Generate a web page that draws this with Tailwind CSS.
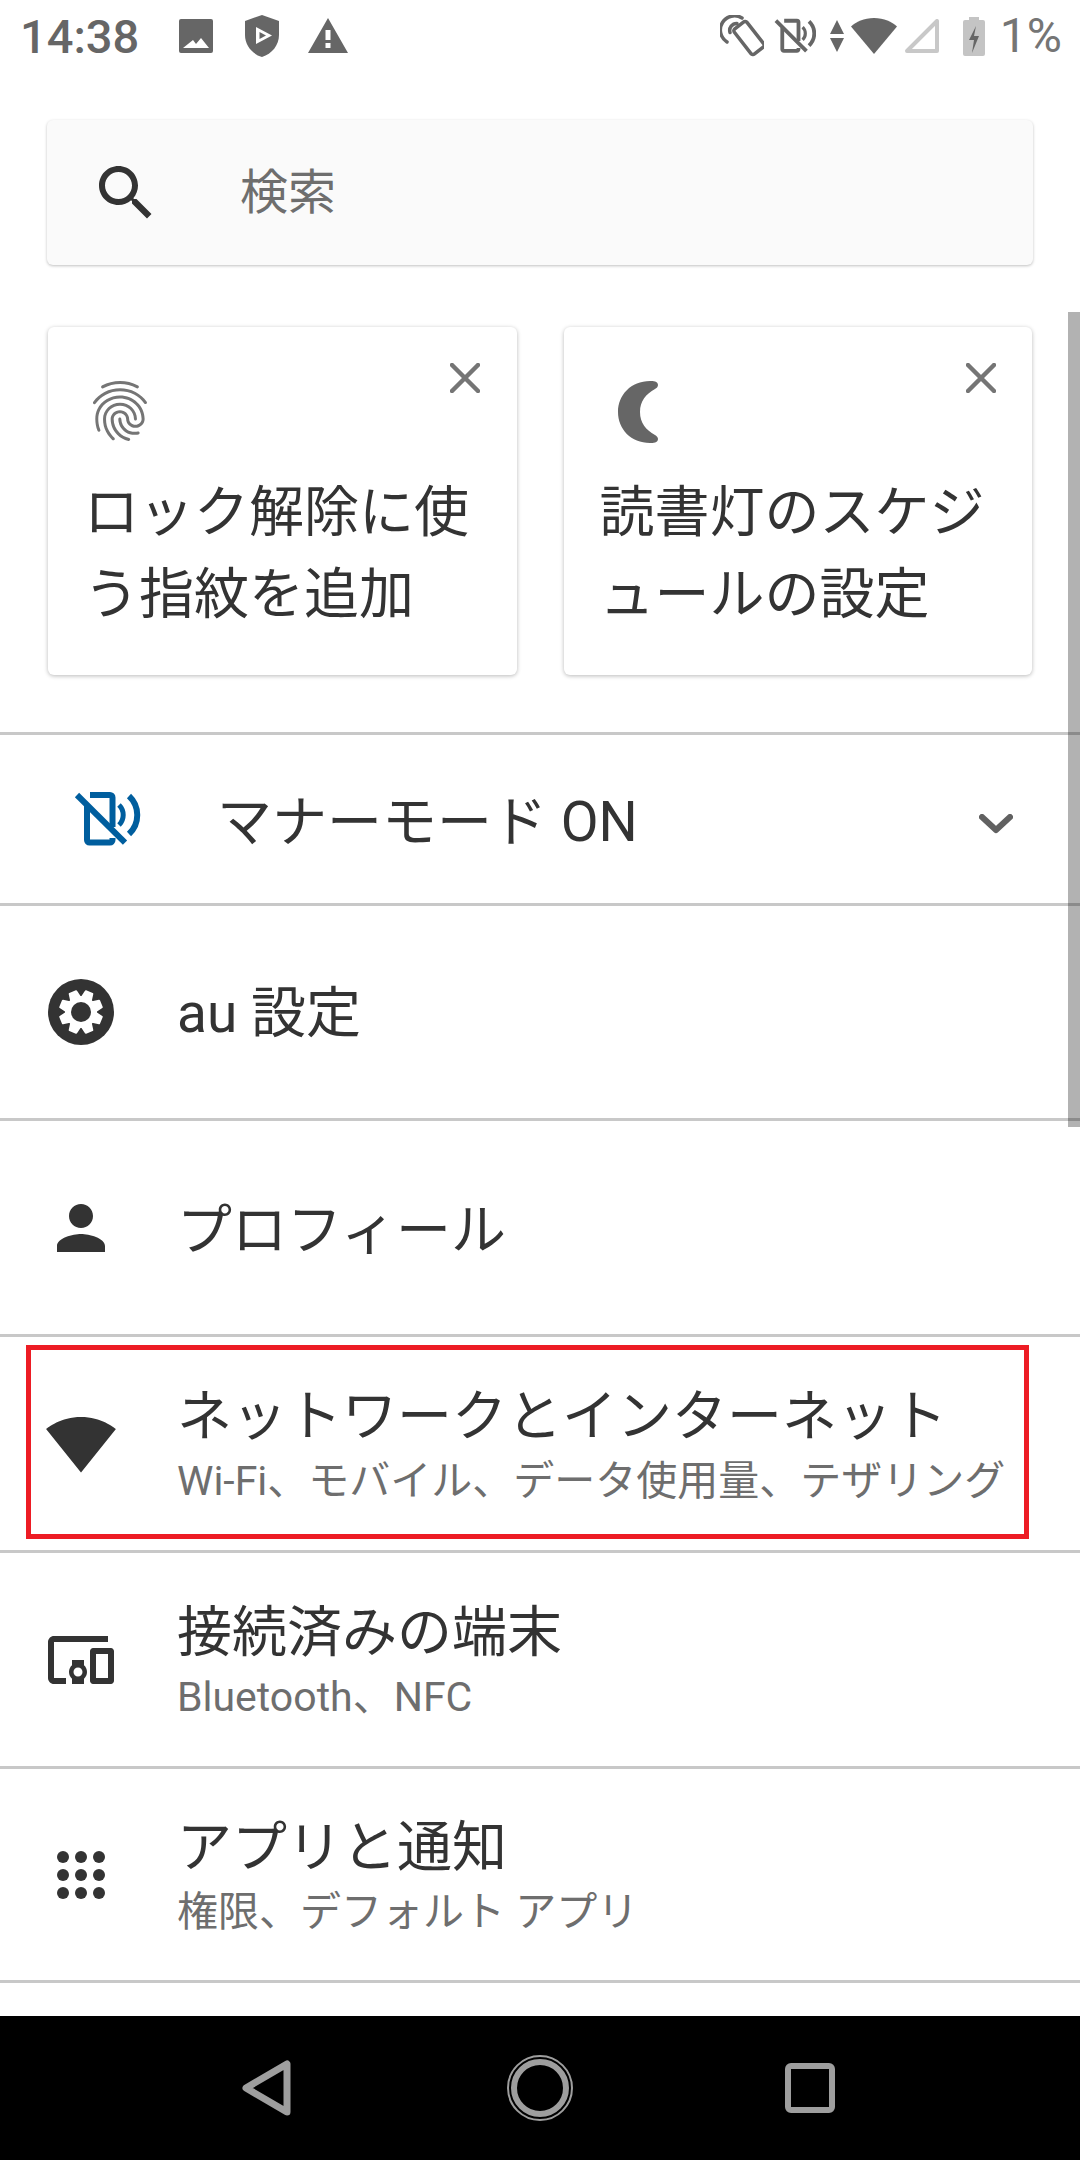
<!DOCTYPE html>
<html lang="ja">
  <head>
    <meta charset="UTF-8" />
    <meta name="viewport" content="width=device-width, initial-scale=1.0" />
    <script src="https://cdn.jsdelivr.net/npm/@tailwindcss/browser@4"></script>
    <title>設定</title>
  </head>

  <body>
    <div class="relative w-[1080px] h-[2160px] overflow-hidden bg-white flex flex-col font-['Roboto','Noto_Sans_CJK_JP',sans-serif]">
      <!-- status bar -->
      <div class="h-[72px] shrink-0 flex items-center text-[#666666]">
        <span class="ml-[20px] w-[119px] text-[47px] font-medium leading-none">14:38</span>
        <svg class="ml-[37px] w-[40px] h-[40px]" viewBox="0 0 40 40" fill="#666666"><path d="M5 3h30a2 2 0 0 1 2 2v30a2 2 0 0 1-2 2H5a2 2 0 0 1-2-2V5a2 2 0 0 1 2-2zm2 29h26l-8-10-5 6-3-4z" fill-rule="evenodd"/></svg>
        <svg class="ml-[26px] w-[40px] h-[44px]" viewBox="0 0 40 44" fill="#666666"><path d="M20 1 37 7v14c0 10-7 19-17 22C10 40 3 31 3 21V7zm-6 12v17l16-8.500z" fill-rule="evenodd"/><path d="M17.500 18 24 21.500 17.500 25z"/></svg>
        <svg class="ml-[26px] w-[40px] h-[36px]" viewBox="0 0 40 36" fill="#666666"><path d="M20 0 40 35H0zm-2.500 12v10h5V12zm0 13v5h5v-5z" fill-rule="evenodd"/></svg>
        <!-- right icons -->
        <svg class="ml-auto w-[44px] h-[42px]" viewBox="0 0 44 42" fill="none" stroke="#666666" stroke-width="3.500" stroke-linecap="round"><rect x="21" y="7" width="16" height="32" rx="2.500" transform="rotate(-38 29 23)"/><path d="M7 27A14 14 0 0 1 22 3M10 17.500A7 7 0 0 1 17 8.500"/></svg>
        <svg class="ml-[10px] w-[42px] h-[36px]" viewBox="3 8 66 56" fill="none" stroke="#666666" stroke-width="6"><path d="M19 12H39a2.500 2.500 0 0 1 2.500 2.500V44M16 23V57a2.500 2.500 0 0 0 2.500 2.500H39a2.500 2.500 0 0 0 2.500-2.500V55"/><path d="M6 12 54 59.700"/><path d="M48 22a14 14 0 0 1 0 20" stroke-width="5"/><path d="M58 13a26 26 0 0 1 0 38"/></svg>
        <svg class="ml-[14px] w-[14px] h-[32px]" viewBox="0 0 14 32" fill="#666666"><path d="M7 0 14 14H0zM0 18h14L7 32z"/></svg>
        <svg class="ml-[7px] w-[46px] h-[36px]" viewBox="0 0 46 36" fill="#666666"><path d="M23 36 46 8.500C41 4 33 0 23 0S5 4 0 8.500z"/></svg>
        <svg class="ml-[8px] w-[34px] h-[34px]" viewBox="0 0 34 34" fill="none" stroke="#c8c8c8" stroke-width="4" stroke-linejoin="round"><path d="M32 2v30H2z"/></svg>
        <svg class="ml-[24px] w-[22px] h-[39px]" viewBox="0 0 22 39"><path d="M6 0h10v3h4a2 2 0 0 1 2 2v32a2 2 0 0 1-2 2H2a2 2 0 0 1-2-2V5a2 2 0 0 1 2-2h4z" fill="#c4c4c4"/><path d="M13 9 6 23h5l-2 13 7-17h-5z" fill="#666666"/></svg>
        <span class="ml-[15px] mr-[18px] text-[48px] leading-none text-[#757575]">1%</span>
      </div>

      <!-- search -->
      <div class="mt-[48px] mx-[47px] h-[145px] shrink-0 flex items-center rounded-[6px] bg-[#fafafa] shadow-[0_1px_3px_rgba(0,0,0,0.25)]">
        <svg class="ml-[43px] w-[72px] h-[72px]" viewBox="0 0 24 24" fill="#333333"><path d="M15.500 14h-.79l-.28-.27C15.410 12.590 16 11.110 16 9.500 16 5.910 13.090 3 9.500 3S3 5.910 3 9.500 5.910 16 9.500 16c1.610 0 3.090-.59 4.230-1.570l.27.28v.79l5 4.990L20.490 19l-4.990-5zm-6 0C7.010 14 5 11.990 5 9.500S7.010 5 9.500 5 14 7.010 14 9.500 11.990 14 9.500 14z"/></svg>
        <span class="ml-[78px] text-[48px] leading-none text-[#6e6e6e]">検索</span>
      </div>

      <!-- suggestion cards -->
      <div class="mt-[62px] px-[48px] grid grid-cols-2 gap-x-[47px] shrink-0">
        <div class="relative h-[348px] rounded-[6px] bg-white shadow-[0_1px_4px_rgba(0,0,0,0.28)]">
          <svg class="ml-[36px] mt-[48px] w-[72px] h-[72px]" viewBox="0 0 24 24" fill="#757575"><path d="M17.810 4.470c-.08 0-.16-.02-.23-.06C15.660 3.420 14 3 12.010 3c-1.980 0-3.860.47-5.570 1.410-.24.13-.54.04-.68-.2-.13-.24-.04-.55.2-.68C7.820 2.520 9.860 2 12.010 2c2.130 0 3.990.47 6.030 1.520.25.13.34.43.21.67-.09.18-.26.28-.44.28zM3.500 9.720c-.1 0-.2-.03-.29-.09-.23-.16-.28-.47-.12-.7.99-1.400 2.250-2.500 3.750-3.270C9.980 4.040 14 4.030 17.150 5.650c1.500.77 2.760 1.860 3.750 3.250.16.22.11.54-.12.7-.23.16-.54.11-.7-.12-.9-1.260-2.040-2.250-3.390-2.940-2.870-1.470-6.540-1.470-9.400.01-1.360.7-2.500 1.700-3.400 2.960-.08.14-.23.21-.39.21zm6.250 12.070c-.13 0-.26-.05-.35-.15-.87-.87-1.340-1.430-2.010-2.640-.69-1.230-1.050-2.730-1.050-4.340 0-2.970 2.540-5.390 5.660-5.390s5.660 2.420 5.660 5.390c0 .28-.22.5-.5.5s-.5-.22-.5-.5c0-2.420-2.090-4.390-4.660-4.390-2.570 0-4.660 1.970-4.660 4.390 0 1.440.32 2.770.93 3.850.64 1.150 1.080 1.640 1.850 2.420.19.2.19.51 0 .71-.11.1-.24.15-.37.15zm7.170-1.850c-1.190 0-2.240-.3-3.100-.89-1.490-1.010-2.380-2.650-2.380-4.390 0-.28.22-.5.5-.5s.5.22.5.5c0 1.410.72 2.740 1.940 3.560.71.48 1.540.71 2.540.71.24 0 .64-.03 1.040-.1.27-.05.53.13.58.41.05.27-.13.53-.41.58-.57.11-1.070.12-1.210.12zM14.910 22c-.04 0-.09-.01-.13-.02-1.590-.44-2.630-1.030-3.720-2.100-1.400-1.390-2.170-3.240-2.170-5.220 0-1.620 1.380-2.940 3.080-2.940 1.700 0 3.080 1.320 3.080 2.940 0 1.070.93 1.940 2.080 1.940s2.080-.87 2.080-1.940c0-3.770-3.250-6.830-7.250-6.830-2.840 0-5.440 1.580-6.610 4.030-.39.81-.59 1.760-.59 2.800 0 .78.07 2.010.67 3.610.1.26-.03.55-.29.64-.26.1-.55-.04-.64-.29-.49-1.310-.73-2.610-.73-3.960 0-1.200.23-2.290.68-3.240 1.330-2.790 4.280-4.600 7.510-4.600 4.550 0 8.250 3.510 8.250 7.830 0 1.620-1.380 2.940-3.080 2.940s-3.080-1.320-3.080-2.940c0-1.070-.93-1.940-2.080-1.940s-2.080.87-2.080 1.940c0 1.710.66 3.310 1.870 4.510.95.94 1.860 1.460 3.270 1.850.27.07.42.35.35.61-.05.23-.26.38-.47.38z"/></svg>
          <svg class="absolute right-[37px] top-[36px] w-[30px] h-[30px]" viewBox="0 0 30 30" stroke="#757575" stroke-width="4.500" stroke-linecap="round"><path d="M2 2 28 28M28 2 2 28"/></svg>
          <p class="mt-[24px] px-[36px] text-[55px] leading-[82px] text-[#333333]">ロック解除に使う指紋を追加</p>
        </div>
        <div class="relative h-[348px] rounded-[6px] bg-white shadow-[0_1px_4px_rgba(0,0,0,0.28)]">
          <svg class="ml-[34px] mt-[48px] w-[72px] h-[72px]" viewBox="0 0 72 72" fill="#666666"><path d="M52 6C55 6 60 6 60 10c0 2-1.500 3-3 4-9 5-15 12-15 23s6 18 15 23c1.500 1 3 2 3 4 0 4-5 4-8 4C33 68 20 54 20 37S33 6 52 6z"/></svg>
          <svg class="absolute right-[36px] top-[36px] w-[30px] h-[30px]" viewBox="0 0 30 30" stroke="#757575" stroke-width="4.500" stroke-linecap="round"><path d="M2 2 28 28M28 2 2 28"/></svg>
          <p class="mt-[24px] px-[36px] text-[55px] leading-[82px] text-[#333333]">読書灯のスケジュールの設定</p>
        </div>
      </div>

      <!-- settings list -->
      <div class="mt-[57px] flex flex-col shrink-0">
        <div class="h-[171px] border-t-[3px] border-[#c8c8c8] flex items-center">
          <svg class="ml-[71px] w-[72px] h-[72px]" viewBox="0 0 72 72" fill="none" stroke="#005e9e" stroke-width="6"><path d="M19 12H39a2.500 2.500 0 0 1 2.500 2.500V44M16 23V57a2.500 2.500 0 0 0 2.500 2.500H39a2.500 2.500 0 0 0 2.500-2.500V55"/><path d="M6 12 54 59.700"/><path d="M48 22a14 14 0 0 1 0 20" stroke-width="5"/><path d="M58 13a26 26 0 0 1 0 38"/></svg>
          <span class="ml-[74px] mt-[6px] text-[55px] leading-none text-[#333333]">マナーモード ON</span>
          <svg class="ml-auto mt-[10px] mr-[67px] w-[34px] h-[20px]" viewBox="0 0 34 20" fill="none" stroke="#616161" stroke-width="6" stroke-linecap="round" stroke-linejoin="round"><path d="M3 3 17 16 31 3"/></svg>
        </div>
        <div class="h-[215px] border-t-[3px] border-[#c8c8c8] flex items-center">
          <svg class="ml-[45px] w-[72px] h-[72px]" viewBox="0 0 72 72"><circle cx="36" cy="36" r="33" fill="#333333"/><g fill="#ffffff" stroke="#ffffff" stroke-width="2" stroke-linejoin="round" transform="rotate(22.500 36 36)"><circle cx="36" cy="36" r="15"/><path d="M32.500 15h7l1.500 8h-10zM32.500 57h7l1.500-8h-10zM15 32.500v7l8 1.500v-10zM57 32.500v7l-8 1.500v-10z"/><path d="M32.500 15h7l1.500 8h-10zM32.500 57h7l1.500-8h-10zM15 32.500v7l8 1.500v-10zM57 32.500v7l-8 1.500v-10z" transform="rotate(45 36 36)"/></g><circle cx="36" cy="36" r="10" fill="#333333"/></svg>
          <span class="ml-[60px] mt-[2px] text-[55px] leading-none text-[#333333]">au 設定</span>
        </div>
        <div class="h-[216px] border-t-[3px] border-[#c8c8c8] flex items-center">
          <svg class="ml-[45px] w-[72px] h-[72px]" viewBox="0 0 24 24" fill="#333333"><path d="M12 12c2.210 0 4-1.790 4-4s-1.790-4-4-4-4 1.790-4 4 1.790 4 4 4zm0 2c-2.670 0-8 1.340-8 4v2h16v-2c0-2.660-5.330-4-8-4z"/></svg>
          <span class="ml-[60px] mt-[6px] text-[55px] leading-none text-[#333333]">プロフィール</span>
        </div>
        <div class="h-[216px] border-t-[3px] border-[#c8c8c8] flex items-center">
          <svg class="ml-[45px] w-[72px] h-[72px]" viewBox="0 0 24 24" fill="#333333"><path d="M12.010 21.490L23.640 7c-.45-.34-4.930-4-11.640-4C5.280 3 .81 6.660.36 7l11.630 14.490.01.01.01-.01z"/></svg>
          <div class="ml-[60px] pt-[9px] flex flex-col">
            <span class="text-[55px] leading-[66px] text-[#333333]">ネットワークとインターネット</span>
            <span class="text-[41px] leading-[64px] text-[#6e6e6e]">Wi-Fi、モバイル、データ使用量、テザリング</span>
          </div>
        </div>
        <div class="h-[216px] border-t-[3px] border-[#c8c8c8] flex items-center">
          <svg class="ml-[45px] w-[72px] h-[72px]" viewBox="0 0 24 24" fill="#333333"><path d="M3 6h18V4H3c-1.100 0-2 .9-2 2v12c0 1.100.9 2 2 2h4v-2H3V6zm10 6H9v1.780c-.61.55-1 1.330-1 2.220s.39 1.670 1 2.220V20h4v-1.780c.61-.55 1-1.340 1-2.220s-.39-1.670-1-2.220V12zm-2 5.500c-.83 0-1.500-.67-1.500-1.500s.67-1.500 1.500-1.500 1.500.67 1.500 1.500-.67 1.500-1.500 1.500zM22 8h-6c-.5 0-1 .5-1 1v10c0 .5.5 1 1 1h6c.5 0 1-.5 1-1V9c0-.5-.5-1-1-1zm-1 10h-4v-8h4v8z"/></svg>
          <div class="ml-[60px] pt-[9px] flex flex-col">
            <span class="text-[55px] leading-[66px] text-[#333333]">接続済みの端末</span>
            <span class="text-[41px] leading-[64px] text-[#6e6e6e]">Bluetooth、NFC</span>
          </div>
        </div>
        <div class="h-[217px] border-y-[3px] border-[#c8c8c8] flex items-center">
          <svg class="ml-[45px] w-[72px] h-[72px]" viewBox="0 0 72 72" fill="#333333"><circle cx="18" cy="18" r="6"/><circle cx="36" cy="18" r="6"/><circle cx="54" cy="18" r="6"/><circle cx="18" cy="36" r="6"/><circle cx="36" cy="36" r="6"/><circle cx="54" cy="36" r="6"/><circle cx="18" cy="54" r="6"/><circle cx="36" cy="54" r="6"/><circle cx="54" cy="54" r="6"/></svg>
          <div class="ml-[60px] pt-[9px] flex flex-col">
            <span class="text-[55px] leading-[66px] text-[#333333]">アプリと通知</span>
            <span class="text-[41px] leading-[64px] text-[#6e6e6e]">権限、デフォルト アプリ</span>
          </div>
        </div>
      </div>

      <!-- nav bar -->
      <div class="mt-auto h-[144px] shrink-0 bg-black relative flex items-center">
        <svg class="ml-[240px] w-[54px] h-[60px]" viewBox="0 0 54 60" fill="none" stroke="#9e9e9e" stroke-width="7" stroke-linejoin="round"><path d="M47 6v48L6 30z"/></svg>
        <svg class="ml-[213px] w-[66px] h-[66px]" viewBox="0 0 66 66" fill="none" stroke="#9e9e9e"><circle cx="33" cy="33" r="32" stroke-width="2"/><circle cx="33" cy="33" r="26" stroke-width="6"/></svg>
        <svg class="ml-[212px] w-[50px] h-[50px]" viewBox="0 0 50 50" fill="none" stroke="#9e9e9e" stroke-width="6"><rect x="3" y="3" width="44" height="44" rx="3"/></svg>
      </div>

      <!-- scrollbar thumb -->
      <div class="absolute right-0 top-[312px] w-[12px] h-[815px] bg-black/30"></div>
      <!-- red annotation box -->
      <div class="absolute left-[26px] top-[1345px] w-[1003px] h-[194px] border-[5px] border-[#ed1c24]"></div>
    </div>
  </body>
</html>
